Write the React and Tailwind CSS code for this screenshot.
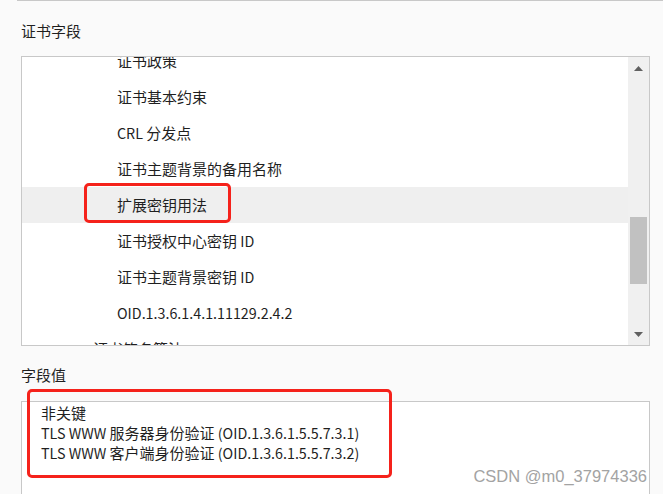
import React from 'react';

const font = { fontFamily: '"Noto Sans CJK SC", "Noto Sans", sans-serif' };

// CJK glyphs in the screenshot run a bit larger than the latin ones
function T({ children }) {
    const parts = children.split(/([\u4e00-\u9fff]+)/);
    return (
        <>
            {parts.map((p, i) =>
                /[\u4e00-\u9fff]/.test(p) ? (
                    <span key={i} className="text-[15px]">{p}</span>
                ) : (
                    <span key={i}>{p}</span>
                )
            )}
        </>
    );
}

const items = [
    { label: '证书政策', indent: 'pl-[95px]' },
    { label: '证书基本约束', indent: 'pl-[95px]' },
    { label: 'CRL 分发点', indent: 'pl-[95px]' },
    { label: '证书主题背景的备用名称', indent: 'pl-[95px]' },
    { label: '扩展密钥用法', indent: 'pl-[95px]', selected: true },
    { label: '证书授权中心密钥 ID', indent: 'pl-[95px]' },
    { label: '证书主题背景密钥 ID', indent: 'pl-[95px]' },
    { label: 'OID.1.3.6.1.4.1.11129.2.4.2', indent: 'pl-[95px]' },
    { label: '证书签名算法', indent: 'pl-[71px]' },
];

function Arrow({ down }) {
    return (
        <svg width="9" height="5" viewBox="0 0 9 5" className="block">
            {down ? (
                <polygon points="0,0 9,0 4.5,5" fill="#606060" />
            ) : (
                <polygon points="0,5 9,5 4.5,0" fill="#606060" />
            )}
        </svg>
    );
}

function App() {
    return (
        <div className="relative w-[663px] h-[494px] overflow-hidden bg-[#fafafa] text-[14.3px] text-[#1f1f1f]" style={font}>
            <div className="ml-[17px] h-px bg-[#c8c8c8]" />

            <div className="pl-[21px] pr-[13px]">
                {/* certificate fields */}
                <div className="mt-[20px] leading-[20px]"><T>证书字段</T></div>
                <div className="mt-[15px] h-[290px] border border-[#c8c8c8] bg-white flex">
                    <div className="flex-1 overflow-hidden">
                        <div className="-mt-[14px]">
                            {items.map((item) => (
                                <div
                                    key={item.label}
                                    className={`relative h-[36px] flex items-center ${item.indent} ${item.selected ? 'bg-[#efefef]' : ''}`}
                                >
                                    <span><T>{item.label}</T></span>
                                    {item.selected && (
                                        <div className="absolute left-[62px] -top-[4px] w-[147px] h-[40px] border-[3px] border-[#f5221b] rounded-[5px]" />
                                    )}
                                </div>
                            ))}
                        </div>
                    </div>
                    {/* scrollbar */}
                    <div className="w-[21px] bg-[#f0f0f0] flex flex-col">
                        <div className="h-[22px] flex items-center justify-center">
                            <Arrow />
                        </div>
                        <div className="flex-1">
                            <div className="mt-[138px] mx-[2px] h-[67px] bg-[#c1c1c1]" />
                        </div>
                        <div className="h-[22px] flex items-center justify-center">
                            <Arrow down />
                        </div>
                    </div>
                </div>

                {/* field value */}
                <div className="mt-[19px] leading-[20px]"><T>字段值</T></div>
                <div className="relative mt-[16px]">
                    <div className="h-[120px] border-t border-x border-[#c8c8c8] bg-white pl-[19px] pt-px leading-[20px]">
                        <div><T>非关键</T></div>
                        <div><T>TLS WWW 服务器身份验证 (OID.1.3.6.1.5.5.7.3.1)</T></div>
                        <div><T>TLS WWW 客户端身份验证 (OID.1.3.6.1.5.5.7.3.2)</T></div>
                    </div>
                    <div className="absolute left-[6px] -top-[12px] w-[365px] h-[89px] border-[3px] border-[#f5221b] rounded-[5px]" />
                </div>
            </div>

            <div
                className="absolute right-[16px] top-[466px] text-[16.5px] leading-[20px] text-[#a3a3a3]"
                style={{ fontFamily: '"Liberation Sans", Arial, sans-serif' }}
            >
                CSDN @m0_37974336
            </div>
        </div>
    );
}

export default App;
